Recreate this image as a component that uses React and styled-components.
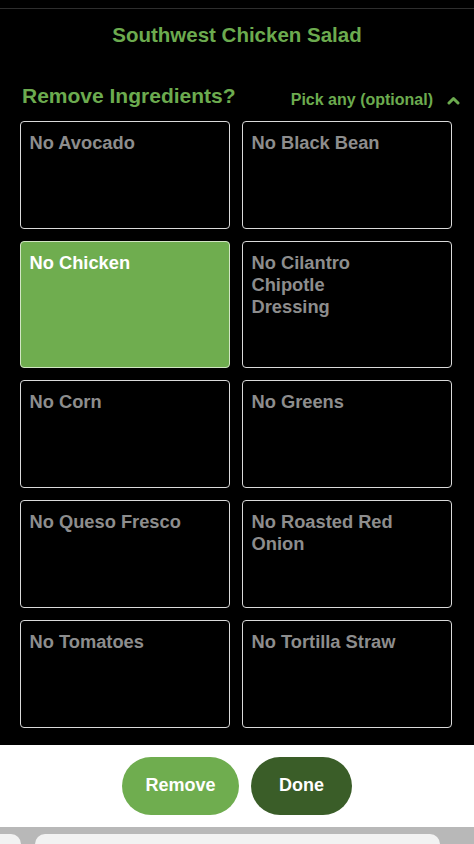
import React from "react";
import styled, { createGlobalStyle } from "styled-components";

const Global = createGlobalStyle`
  html, body { margin: 0; padding: 0; background: #000; }
  body { font-family: "Liberation Sans", Arial, sans-serif; }
  * { box-sizing: border-box; }
`;

const Page = styled.div`
  width: 474px;
  height: 844px;
  display: flex;
  flex-direction: column;
  overflow: hidden;
`;

const Sheet = styled.section`
  background: #000;
  padding-top: 8px;
  padding-bottom: 17px;
`;

const TopRule = styled.div`
  height: 1px;
  background: #2e2e2e;
`;

const Title = styled.h1`
  margin: 14px 0 0;
  text-align: center;
  font-size: 20.5px;
  line-height: 24px;
  font-weight: 700;
  color: #6cab4f;
`;

const Header = styled.div`
  margin-top: 35px;
  padding: 0 14px 0 22px;
  display: flex;
  align-items: center;
  justify-content: space-between;
  height: 28px;
`;

const Heading = styled.h2`
  margin: 0;
  font-size: 21px;
  line-height: 24px;
  font-weight: 700;
  color: #6cab4f;
`;

const Hint = styled.div`
  padding-top: 8px;
  display: flex;
  align-items: center;
  gap: 14px;
  font-size: 16px;
  line-height: 20px;
  font-weight: 700;
  color: #6cab4f;
`;

const Grid = styled.div`
  margin-top: 11px;
  padding: 0 22px 0 20px;
  display: grid;
  grid-template-columns: 1fr 1fr;
  gap: 12px;
`;

const Card = styled.button`
  min-height: 108px;
  padding: 10px 46.5px 48.5px 8.5px;
  border-radius: 4px;
  border: 1.5px solid ${(p) => (p.$on ? "#d2e5c4" : "#dadada")};
  background: ${(p) => (p.$on ? "#6fad4f" : "#000")};
  color: ${(p) => (p.$on ? "#ffffff" : "#8d8d8d")};
  font-family: "Liberation Sans", Arial, sans-serif;
  font-size: 18.3px;
  line-height: 22px;
  font-weight: 700;
  text-align: left;
  display: flex;
  align-items: flex-start;
  cursor: pointer;
`;

const Footer = styled.footer`
  background: #fff;
  height: 82px;
  display: flex;
  justify-content: center;
  align-items: flex-start;
  padding-top: 12px;
  gap: 12px;
`;

const Pill = styled.button`
  width: ${(p) => p.$w}px;
  height: 58px;
  border: none;
  border-radius: 29px;
  background: ${(p) => (p.$dark ? "#3a5d28" : "#6fad4f")};
  color: #fff;
  font-family: "Liberation Sans", Arial, sans-serif;
  font-size: 18px;
  font-weight: 700;
  cursor: pointer;
`;

const TabBar = styled.div`
  flex: 1;
  background: #b8b8b8;
  padding-top: 7px;
  display: flex;
  gap: 14px;
`;

const Tab = styled.div`
  background: #f2f2f2;
  width: ${(p) => p.$w}px;
  border-radius: ${(p) => (p.$stub ? "0 10px 0 0" : "12px 12px 0 0")};
`;

const items = [
  "No Avocado",
  "No Black Bean",
  "No Chicken",
  "No Cilantro Chipotle Dressing",
  "No Corn",
  "No Greens",
  "No Queso Fresco",
  "No Roasted Red Onion",
  "No Tomatoes",
  "No Tortilla Straw",
];

const Chevron = () => (
  <svg width="13" height="9" viewBox="0 0 13 9">
    <polyline
      points="2,7 6.5,2.5 11,7"
      fill="none"
      stroke="#6cab4f"
      strokeWidth="3"
      strokeLinecap="round"
      strokeLinejoin="round"
    />
  </svg>
);

export default function App() {
  return (
    <Page>
      <Global />
      <Sheet>
        <TopRule />
        <Title>Southwest Chicken Salad</Title>
        <Header>
          <Heading>Remove Ingredients?</Heading>
          <Hint>
            Pick any (optional)
            <Chevron />
          </Hint>
        </Header>
        <Grid>
          {items.map((name) => (
            <Card key={name} $on={name === "No Chicken"}>
              {name}
            </Card>
          ))}
        </Grid>
      </Sheet>
      <Footer>
        <Pill $w={117}>Remove</Pill>
        <Pill $w={101} $dark>
          Done
        </Pill>
      </Footer>
      <TabBar>
        <Tab $w={21} $stub />
        <Tab $w={405} />
      </TabBar>
    </Page>
  );
}
